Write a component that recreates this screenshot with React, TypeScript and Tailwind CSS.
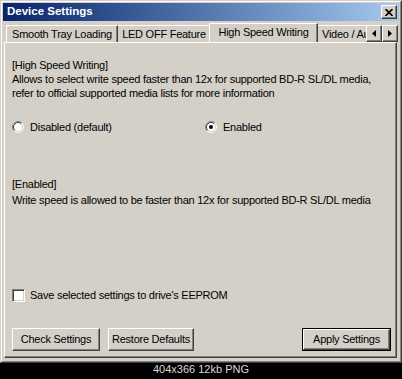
import React from 'react';

const raised =
  'border border-t-white border-l-white border-r-[#404040] border-b-[#404040] shadow-[inset_-1px_-1px_#808080]';

function Radio({ checked }: { checked?: boolean }) {
  return (
    <svg width="12" height="12" viewBox="0 0 12 12" className="shrink-0">
      <circle cx="6" cy="6" r="5" fill="#fff" />
      <path d="M2.11 9.89 A5.5 5.5 0 0 1 9.89 2.11" fill="none" stroke="#808080" />
      <path d="M9.89 2.11 A5.5 5.5 0 0 1 2.11 9.89" fill="none" stroke="#fff" />
      <path d="M2.82 9.18 A4.5 4.5 0 0 1 9.18 2.82" fill="none" stroke="#404040" />
      <path d="M9.18 2.82 A4.5 4.5 0 0 1 2.82 9.18" fill="none" stroke="#d4d0c8" />
      {checked && <circle cx="6" cy="6" r="2" fill="#000" />}
    </svg>
  );
}

function Arrow({ dir }: { dir: 'left' | 'right' }) {
  return (
    <div className={`w-[16px] h-[17px] bg-[#d4d0c8] flex items-center justify-center ${raised}`}>
      <svg width="4" height="7" viewBox="0 0 4 7">
        {dir === 'left' ? <path d="M4 0 L0 3.5 L4 7 Z" fill="#000" /> : <path d="M0 0 L4 3.5 L0 7 Z" fill="#000" />}
      </svg>
    </div>
  );
}

function Button({ label, width, isDefault }: { label: string; width: string; isDefault?: boolean }) {
  const inner = (
    <div className={`h-full w-full bg-[#d4d0c8] flex items-center justify-center ${raised}`}>
      <span className="whitespace-nowrap">{label}</span>
    </div>
  );
  if (isDefault) {
    return <div className={`${width} h-[23px] border border-black`}>{inner}</div>;
  }
  return <div className={`${width} h-[23px]`}>{inner}</div>;
}

export default function App() {
  return (
    <div className="w-[402px] h-[379px] bg-black overflow-hidden flex flex-col font-['Liberation_Sans',Arial,sans-serif] text-[11px] tracking-[-0.25px] text-black">
      {/* window */}
      <div className="h-[363px] shrink-0 border border-t-[#d4d0c8] border-l-[#d4d0c8] border-r-[#404040] border-b-[#404040]">
        <div className="h-full border border-t-white border-l-white border-r-[#808080] border-b-[#808080] bg-[#d4d0c8] p-[1px] flex flex-col">
          {/* title bar */}
          <div className="h-[18px] shrink-0 bg-linear-to-r from-[#0a246a] to-[#a6caf0] flex items-center justify-between pl-[4px] pr-[2px]">
            <span className="text-white font-bold text-[11.5px] tracking-normal whitespace-nowrap">Device Settings</span>
            <div className={`w-[16px] h-[14px] bg-[#d4d0c8] flex items-center justify-center ${raised}`}>
              <svg width="8" height="7" viewBox="0 0 8 7">
                <path d="M0.5 0 L7.5 7 M7.5 0 L0.5 7" stroke="#000" strokeWidth="1.6" />
              </svg>
            </div>
          </div>

          {/* client */}
          <div className="flex-1 flex flex-col pl-[1px] pr-[2px] pb-[2px]">
            {/* tabs */}
            <div className="h-[21px] shrink-0 flex items-end">
              <div className="flex-1 h-full overflow-hidden flex items-end pl-[2px]">
                <div className={`w-[112px] h-[17px] shrink-0 flex items-center justify-center whitespace-nowrap border-t border-l border-t-white border-l-white border-r border-r-[#404040] shadow-[inset_-1px_0_#808080]`}>
                  Smooth Tray Loading
                </div>
                <div className={`w-[93px] h-[17px] shrink-0 flex items-center justify-center whitespace-nowrap border-t border-r border-t-white border-r-[#404040] shadow-[inset_-1px_0_#808080]`}>
                  LED OFF Feature
                </div>
                <div className={`relative z-10 w-[109px] h-[20px] -mb-[1px] -ml-[2px] shrink-0 bg-[#d4d0c8] flex items-center justify-center pb-[2px] whitespace-nowrap border-t border-l border-t-white border-l-white border-r border-r-[#404040] shadow-[inset_-1px_0_#808080]`}>
                  High Speed Writing
                </div>
                <div className={`w-[70px] h-[17px] -ml-[2px] shrink-0 flex items-center pl-[6px] whitespace-nowrap border-t border-t-white`}>
                  Video / Audio
                </div>
              </div>
              <div className="flex shrink-0 -mr-[1px]">
                <Arrow dir="left" />
                <Arrow dir="right" />
              </div>
            </div>

            {/* panel */}
            <div className="flex-1 flex flex-col border-t border-l border-t-white border-l-white border-r border-b border-r-[#404040] border-b-[#404040] shadow-[inset_-1px_-1px_#808080] pl-[7px] pr-[5px]">
              <div className="mt-[15px] leading-[14px] whitespace-nowrap">
                <div>[High Speed Writing]</div>
                <div>Allows to select write speed faster than 12x for supported BD-R SL/DL media,</div>
                <div>refer to official supported media lists for more information</div>
              </div>

              <div className="mt-[20px] h-[14px] flex items-center">
                <label className="w-[193px] flex items-center gap-[6px]">
                  <Radio />
                  <span>Disabled (default)</span>
                </label>
                <label className="flex items-center gap-[6px]">
                  <Radio checked />
                  <span>Enabled</span>
                </label>
              </div>

              <div className="mt-[42px] leading-[16px] whitespace-nowrap">
                <div>[Enabled]</div>
                <div>Write speed is allowed to be faster than 12x for supported BD-R SL/DL media</div>
              </div>

              <div className="mt-[80px] h-[14px] flex items-center gap-[5px]">
                <div className="w-[13px] h-[13px] bg-white border border-t-[#808080] border-l-[#808080] border-r-white border-b-white shadow-[inset_1px_1px_#404040,inset_-1px_-1px_#d4d0c8]" />
                <span>Save selected settings to drive's EEPROM</span>
              </div>

              <div className="mt-[26px] flex items-center">
                <Button label="Check Settings" width="w-[88px]" />
                <div className="w-[8px]" />
                <Button label="Restore Defaults" width="w-[86px]" />
                <div className="flex-1" />
                <Button label="Apply Settings" width="w-[89px]" isDefault />
              </div>
            </div>
          </div>
        </div>
      </div>

      {/* footer */}
      <div className="h-[16px] flex items-start justify-center leading-[12px] text-[#d8d8d8] tracking-normal">
        404x366 12kb PNG
      </div>
    </div>
  );
}
